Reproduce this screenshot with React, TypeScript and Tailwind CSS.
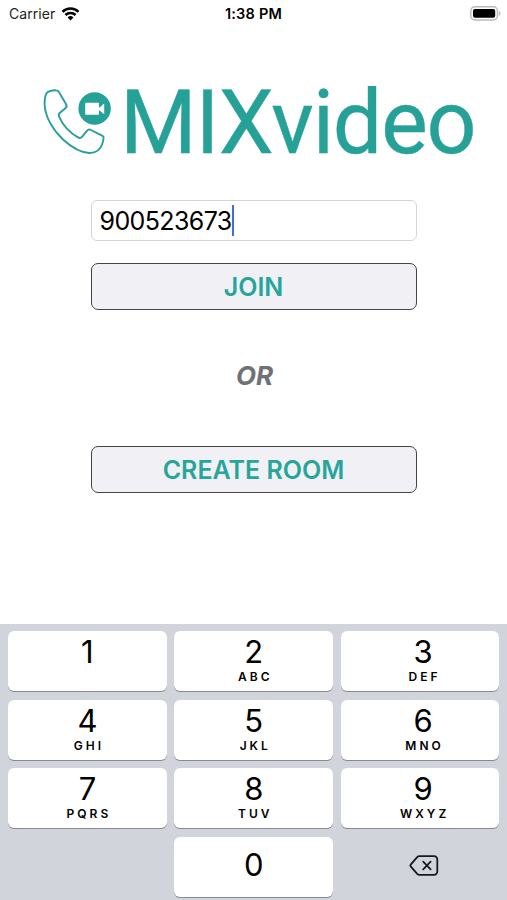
import * as React from 'react';

type KeyType = {
  digit: string;
  letters?: string;
};

const KEYS: KeyType[] = [
  { digit: '1', letters: '' },
  { digit: '2', letters: 'ABC' },
  { digit: '3', letters: 'DEF' },
  { digit: '4', letters: 'GHI' },
  { digit: '5', letters: 'JKL' },
  { digit: '6', letters: 'MNO' },
  { digit: '7', letters: 'PQRS' },
  { digit: '8', letters: 'TUV' },
  { digit: '9', letters: 'WXYZ' },
];

const StatusBar = (): React.ReactNode => (
  <div className="grid h-[27px] shrink-0 grid-cols-3 items-center pl-[9px] pr-[6px] text-[14px] text-[#222]">
    <div className="flex items-center gap-[6px]">
      <span className="tracking-[0.05px]">Carrier</span>
      <svg width="19" height="14" viewBox="0 0 18 14" fill="none" stroke="#000" strokeWidth="2.5">
        <path d="M1 4.9a11.4 11.4 0 0 1 16 0" />
        <path d="M3.9 8a7.2 7.2 0 0 1 10.2 0" />
        <path d="M9 13.4 6.1 10.4a4.2 4.2 0 0 1 5.8 0z" fill="#000" stroke="none" />
      </svg>
    </div>
    <div className="-ml-[3px] text-center text-[14.5px] font-semibold tracking-[0.2px] text-black">1:38 PM</div>
    <svg className="justify-self-end" width="31" height="15" viewBox="0 0 31 15">
      <rect x="0.8" y="0.8" width="26.6" height="13.2" rx="4" fill="#fff" stroke="#b9b9b9" strokeWidth="1.4" />
      <rect x="3" y="3" width="22.2" height="8.8" rx="2" fill="#000" />
      <path d="M28.8 5v5c2.2-.8 2.2-4.2 0-5z" fill="#b9b9b9" />
    </svg>
  </div>
);

const Logo = (): React.ReactNode => (
  <div className="flex h-[90px] items-center pl-[42px] text-[#26a197]">
    <svg className="shrink-0" width="72" height="68" viewBox="42 87 72 68" fill="none">
      <path
        d="M47.5 92.2c2.5-1.4 5.5-2 8.5-1.9 1.3 0 2.2.6 2.9 1.7l7.2 12.2c1 1.7.8 2.8-.6 4l-5.6 4.6c-1.3 1.2-1.5 2.3-.7 4 3.8 8.5 10.5 15.8 18.8 20.6 1.6.9 2.8.8 4-.6l5.1-6.1c1.1-1.3 2.3-1.5 3.8-.7l11.6 5.9c1 .5 1.3 1.2 1.1 2.300-.6 4-1.500 7.300-3.400 9.800-2.200 2.900-6.200 5-10.700 5-8.500-.2-18.500-6.200-26.500-13.500C53 130 44.800 116.500 44.600 104c0-5.500.6-9.800 2.900-11.800z"
        stroke="currentColor"
        strokeWidth="1.9"
        strokeLinejoin="round"
      />
      <circle cx="94.6" cy="108.5" r="16.2" fill="currentColor" />
      <rect x="85.2" y="102.8" width="13.8" height="12" rx="0.6" fill="#fff" />
      <path d="M98.5 107.5h1l4.7-4v10.8l-4.7-3.8h-1z" fill="#fff" />
    </svg>
    <span className="ml-[5.5px] mt-[4px] origin-left scale-x-[0.986] font-[Roboto] text-[89px] leading-[90px] tracking-[-1.2px] [-webkit-text-stroke:0.4px_#26a197]">
      MIXvideo
    </span>
  </div>
);

const RoomButton = ({ label }: { label: string }): React.ReactNode => (
  <button
    type="button"
    className="flex h-[47px] w-[326px] items-center justify-center rounded-[7px] border-[1.5px] border-[#444446] bg-[#f1f0f5] pt-[2px] text-[25px] font-semibold text-[#26a69a]"
  >
    {label}
  </button>
);

const Key = ({ digit, letters }: KeyType): React.ReactNode => (
  <button
    type="button"
    className="flex h-[60px] flex-col items-center rounded-[6px] bg-white text-black shadow-[0_1px_0_#898a8d]"
  >
    <span
      className={`text-[31px] font-[375] leading-[36px] ${letters === undefined ? 'mt-[10px]' : 'mt-[3px]'}`}
    >
      {digit}
    </span>
    {letters && (
      <span className="-mr-[3px] text-[12px] font-semibold leading-[14px] tracking-[3px]">{letters}</span>
    )}
  </button>
);

const Keyboard = (): React.ReactNode => (
  <div className="mt-auto grid h-[276px] grid-cols-3 content-start gap-x-[7.5px] gap-y-[8.6px] bg-[#d1d4da] pl-2 pr-[7.5px] pt-[7px] [&>:nth-child(3n)]:pl-[6px]">
    {KEYS.map((key) => (
      <Key key={key.digit} digit={key.digit} letters={key.letters} />
    ))}
    <div />
    <Key digit="0" />
    <button type="button" aria-label="delete" className="flex items-center justify-center pb-[2px]">
      <svg
        className="ml-[1px]"
        width="30"
        height="22"
        viewBox="0 0 30 22"
        fill="none"
        stroke="#16191d"
        strokeWidth="1.8"
        strokeLinecap="round"
        strokeLinejoin="round"
      >
        <path d="M10.5 1.2H25a3.3 3.3 0 0 1 3.3 3.3v12a3.3 3.3 0 0 1-3.3 3.3H10.5c-1 0-1.6-.3-2.3-1l-6.3-7.1q-1.2-1.2 0-2.4l6.3-7.1c.7-.7 1.300-1 2.300-1z" />
        <path d="m14.2 6.7 7.4 7.6M21.6 6.7l-7.4 7.6" />
      </svg>
    </button>
  </div>
);

const App = (): React.ReactNode => {
  return (
    <div className="flex h-[900px] w-[507px] flex-col overflow-hidden bg-white font-[Inter,sans-serif]">
      <StatusBar />
      <main className="flex flex-col pt-[49px]">
        <Logo />
        <div className="flex flex-col items-center pt-[34px]">
          <div className="flex h-[41px] w-[326px] items-center rounded-[6px] border-[1.5px] border-[#d5d5d7] pl-[8px] text-[25px] text-black">
            <span className="pt-[2px] tracking-[-0.6px]">900523673</span>
            <span className="h-[31px] w-[2px] bg-[#4669e0]" />
          </div>
          <div className="pt-[22px]">
            <RoomButton label="JOIN" />
          </div>
          <div className="pl-[2px] pt-[48px] text-[26px] font-bold italic leading-[36px] text-[#707076]">OR</div>
          <div className="pt-[52px]">
            <RoomButton label="CREATE ROOM" />
          </div>
        </div>
      </main>
      <Keyboard />
    </div>
  );
};

export default App;
